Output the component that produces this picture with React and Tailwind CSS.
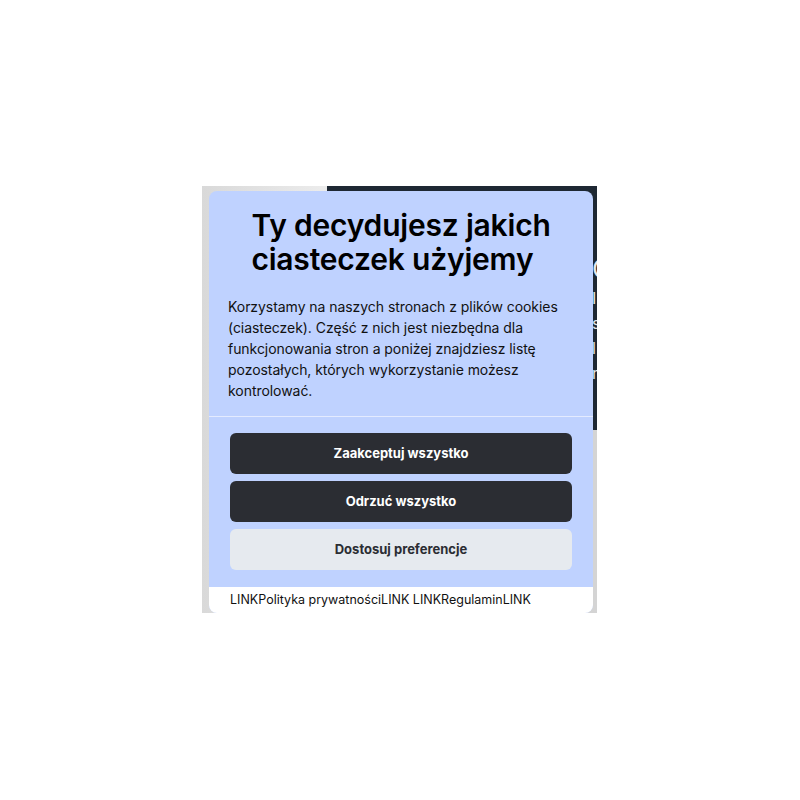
export default function App() {
  return (
    <div className="w-[800px] h-[800px] bg-white pt-[186px] pl-[202px]" style={{ fontFamily: 'Inter, "Noto Sans", sans-serif' }}>
      <div className="relative w-[395px] h-[427px] overflow-hidden bg-[#d4d4d4]">
        <div className="flex h-full">
          <div className="w-[125px] shrink-0 h-full bg-gradient-to-r from-[#d9d9d9] to-[#ececec]" />
          <div className="flex-1 min-w-0 flex flex-col">
            <div className="h-[244px] overflow-hidden bg-[#1e2833] pl-[265px] pt-[68px] text-[#e5e7eb] flex flex-col gap-[3px] whitespace-nowrap">
              <div className="text-[26px] leading-[30px]">O</div>
              <div className="text-[16px] leading-[22px]">I</div>
              <div className="text-[16px] leading-[22px]">s</div>
              <div className="text-[16px] leading-[22px]">l</div>
              <div className="text-[16px] leading-[22px]">r</div>
            </div>
            <div className="flex-1 bg-[#d4d4d4]" />
          </div>
        </div>
        <div className="absolute left-[7px] top-[5px] w-[384px] rounded-lg overflow-hidden bg-[#bfd2ff]">
          <div className="px-[19px] pt-[17px] pb-[15px]">
            <h1 className="mx-auto w-fit text-[30px] leading-[34px] font-semibold text-black tracking-[-0.2px]">
              Ty decydujesz jakich<br />ciasteczek użyjemy
            </h1>
            <p className="mt-[20px] text-[14px] leading-[21px] text-[#111] tracking-[-0.05px]">
              Korzystamy na naszych stronach z plików cookies (ciasteczek). Część z nich jest niezbędna dla funkcjonowania stron a poniżej znajdziesz listę pozostałych, których wykorzystanie możesz kontrolować.
            </p>
          </div>
          <div className="h-px bg-[#e4ebff]" />
          <div className="px-[21px] pt-[16px] pb-[17px] flex flex-col gap-[7px]">
            <button className="h-[41px] rounded-md bg-[#2b2d33] text-white text-[13px] font-bold">Zaakceptuj wszystko</button>
            <button className="h-[41px] rounded-md bg-[#2b2d33] text-white text-[13px] font-bold">Odrzuć wszystko</button>
            <button className="h-[41px] rounded-md bg-[#e6eaef] text-[#2b2d33] text-[13px] font-bold">Dostosuj preferencje</button>
          </div>
          <div className="bg-white h-[26px] px-[21px] flex items-center text-[12.5px] text-[#111]">
            LINKPolityka prywatnościLINK LINKRegulaminLINK
          </div>
        </div>
      </div>
    </div>
  );
}
